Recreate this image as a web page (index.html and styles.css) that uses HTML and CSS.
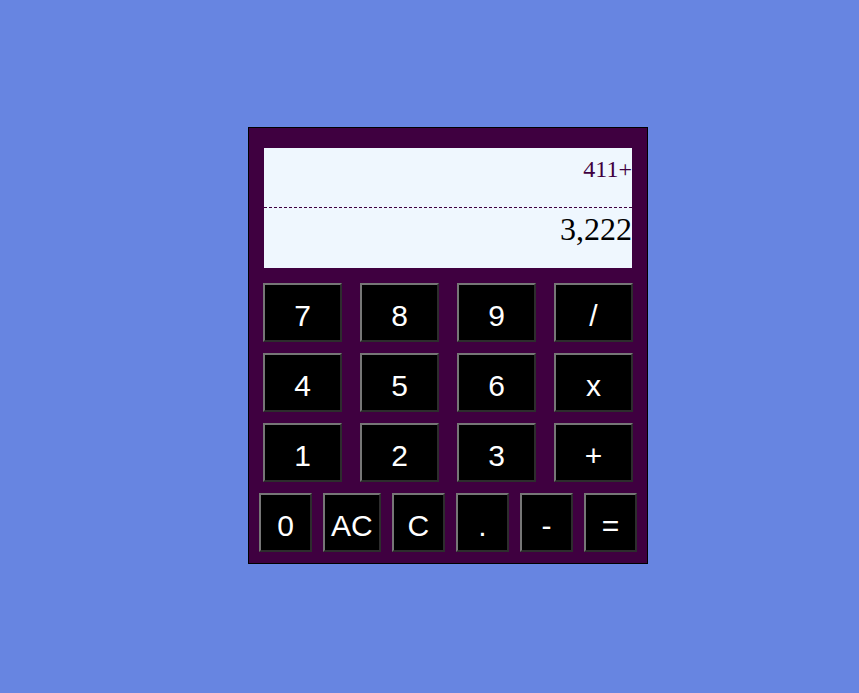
FILE: index.html
```html
<!DOCTYPE html>
<html>
<head>
<meta charset="utf-8">
<title>Calculator</title>
<link rel="stylesheet" href="styles.css">
</head>
<body>
<div class="calculator">
  <div class="display">
    <div class="previous">411+</div>
    <div class="current">3,222</div>
  </div>
  <div class="row">
    <button class="key">7</button>
    <button class="key">8</button>
    <button class="key">9</button>
    <button class="key">/</button>
  </div>
  <div class="row">
    <button class="key">4</button>
    <button class="key">5</button>
    <button class="key">6</button>
    <button class="key">x</button>
  </div>
  <div class="row">
    <button class="key">1</button>
    <button class="key">2</button>
    <button class="key">3</button>
    <button class="key">+</button>
  </div>
  <div class="row row-bottom">
    <button class="key">0</button>
    <button class="key">AC</button>
    <button class="key">C</button>
    <button class="key">.</button>
    <button class="key">-</button>
    <button class="key">=</button>
  </div>
</div>
</body>
</html>
```

FILE: styles.css
```css
html, body {
  margin: 0;
  padding: 0;
}

body {
  background: #6785e1;
  min-height: 693px;
  box-sizing: border-box;
  display: flex;
  justify-content: center;
  align-items: flex-start;
  padding-top: 127px;
  padding-left: 37px;
}

.calculator {
  width: 398px;
  background: #3f0040;
  border: 1px solid #000;
  padding: 20px 0 11px;
  display: flex;
  flex-direction: column;
  gap: 11px;
}

.display {
  margin: 0 15px 4px;
  height: 120px;
  background: #eff7fe;
  font-family: "Liberation Serif", "Times New Roman", serif;
  text-align: right;
  display: flex;
  flex-direction: column;
}

.previous {
  height: 60px;
  box-sizing: border-box;
  padding-top: 8px;
  font-size: 24px;
  color: #3f0040;
  border-bottom: 1px dashed #3f0040;
}

.current {
  height: 60px;
  box-sizing: border-box;
  padding-top: 3px;
  font-size: 32px;
  color: #000;
}

.row {
  display: flex;
  gap: 18px;
  margin: 0 14px;
}

.row-bottom {
  gap: 11px;
  margin: 0 10px;
}

.key {
  flex: 1 1 0;
  height: 59px;
  margin: 0;
  padding: 6px 6px 0;
  background: #000;
  color: #fff;
  font-family: "Liberation Sans", Arial, sans-serif;
  font-size: 30px;
  border-width: 2px;
  border-style: solid;
  border-color: #767676 #2d2d2d #2d2d2d #767676;
  box-sizing: border-box;
}
```
